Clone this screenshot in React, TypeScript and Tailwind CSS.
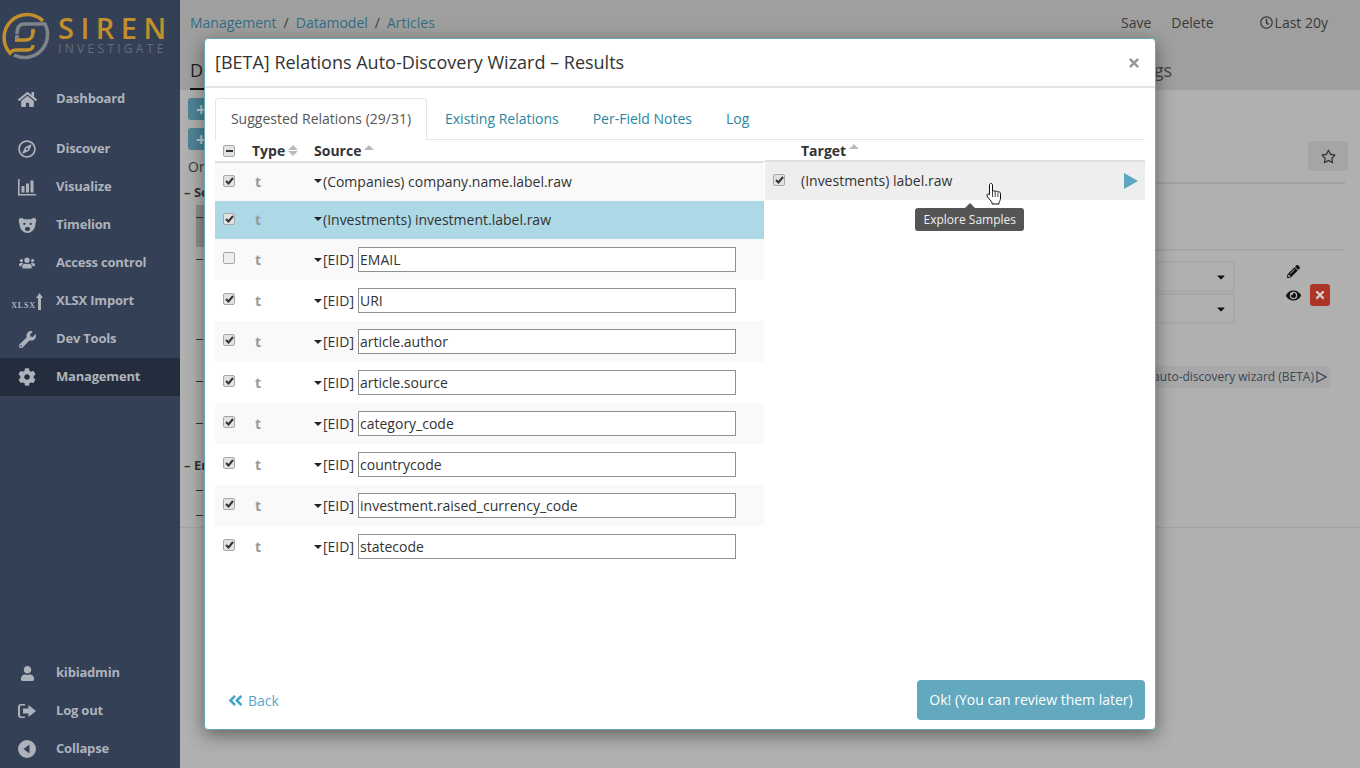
import type { ReactNode } from "react"
import {
  FaAngleDoubleLeft,
  FaCaretDown,
  FaCog,
  FaEye,
  FaHome,
  FaPencilAlt,
  FaRegClock,
  FaRegCompass,
  FaRegStar,
  FaTimes,
  FaUser,
  FaUsers,
  FaWrench,
} from "react-icons/fa"

const font = { fontFamily: '"Open Sans", sans-serif' }

function BarsIcon() {
  return (
    <svg width="18" height="18" viewBox="0 0 18 18" fill="currentColor">
      <path d="M0 1h1.600v15H18v1.600H0z" />
      <rect x="3.500" y="8" width="3" height="6.500" />
      <rect x="8" y="5.500" width="3" height="9" />
      <rect x="12.500" y="2.500" width="3" height="12" />
    </svg>
  )
}

function BearIcon() {
  return (
    <svg width="19" height="17" viewBox="0 0 18 16" fill="currentColor">
      <path d="M1 1.500C3 .5 4.500 1 5.500 2h7c1-1 2.500-1.500 4.500-.5.500 2 .3 3.500-.5 4.500.3 4-2.500 9-7.500 9s-7.800-5-7.500-9C.7 5 .5 3.500 1 1.500z" />
      <circle cx="6" cy="6.500" r="1.100" fill="#344056" />
      <circle cx="12" cy="6.500" r="1.100" fill="#344056" />
      <path d="M6.500 10.500c1-1.500 4-1.500 5 0 0 2-1.200 2.800-2.500 2.800s-2.500-.8-2.500-2.800z" fill="#344056" />
    </svg>
  )
}

function LogoutIcon() {
  return (
    <svg width="18" height="16" viewBox="0 0 18 16" fill="currentColor">
      <path d="M3 1h4v1.500H3.200c-.7 0-1.200.5-1.200 1.200v8.600c0 .7.500 1.200 1.200 1.200H7V15H3c-1.700 0-3-1.300-3-3V4c0-1.700 1.300-3 3-3z" />
      <path d="M10.500 2 18 8l-7.500 6v-3.500H5v-5h5.500z" />
    </svg>
  )
}

function CollapseIcon() {
  return (
    <svg width="18" height="18" viewBox="0 0 18 18" fill="currentColor">
      <path fillRule="evenodd" d="M9 0a9 9 0 1 1 0 18A9 9 0 0 1 9 0zm2.500 4.500L5.500 9l6 4.500z" />
    </svg>
  )
}

function XlsxIcon() {
  return (
    <span className="flex items-end">
      <span className="text-[8px] leading-none font-bold tracking-[0.8px]" style={{ fontFamily: '"Liberation Serif", serif' }}>
        XLSX
      </span>
      <svg width="7" height="17" viewBox="0 0 7 17" fill="currentColor">
        <path d="M3.500 0 7 5H5v12H2V5H0z" />
      </svg>
    </span>
  )
}

function Logo() {
  return (
    <div className="flex h-[80px] items-start pl-[1px] pt-[11px]">
      <svg width="51" height="50" viewBox="0 0 51 50" fill="none" strokeWidth="3.500">
        <path d="M42 10A23 23 0 0 0 9 42Q11 39 15 39H27C31 39 32 36 32 34" stroke="#c28f2c" />
        <path d="M14 29H25C29 29 32 26 32 21" stroke="#c28f2c" />
        <circle cx="32" cy="20" r="2.200" fill="#c28f2c" />
        <path d="M13 44A23 23 0 0 0 44 13H23C18 13 16 17 16 23" stroke="#80848a" />
        <circle cx="16" cy="26" r="2.200" fill="#80848a" />
      </svg>
      <div className="ml-[6px] mt-[2px] flex flex-col">
        <span className="text-[29px] font-semibold leading-[29px] tracking-[6.500px] text-[#c28f2c]">SIREN</span>
        <span className="mt-[1px] text-[12px] leading-[12px] tracking-[3.300px] text-[#646c7c]">INVESTIGATE</span>
      </div>
    </div>
  )
}

function NavItem({ icon, label, active }: { icon: ReactNode; label: string; active?: boolean }) {
  return (
    <div className={`flex h-[38px] items-center text-[#aeb3bb] ${active ? "bg-[#232d3d]" : ""}`}>
      <span className="flex w-[56px] justify-center pr-[2px]">{icon}</span>
      <span className="text-[13px] font-bold tracking-[-0.2px]">{label}</span>
    </div>
  )
}

function Sidebar() {
  return (
    <aside className="flex h-full w-[180px] shrink-0 flex-col justify-between bg-[#344056]">
      <div>
        <Logo />
        <NavItem icon={<FaHome size={19} />} label="Dashboard" />
        <div className="h-[12px]" />
        <NavItem icon={<FaRegCompass size={18} />} label="Discover" />
        <NavItem icon={<BarsIcon />} label="Visualize" />
        <NavItem icon={<BearIcon />} label="Timelion" />
        <NavItem icon={<FaUsers size={16} />} label="Access control" />
        <NavItem icon={<XlsxIcon />} label="XLSX Import" />
        <NavItem icon={<FaWrench size={17} />} label="Dev Tools" />
        <NavItem icon={<FaCog size={18} />} label="Management" active />
      </div>
      <div>
        <NavItem icon={<FaUser size={15} />} label="kibiadmin" />
        <NavItem icon={<LogoutIcon />} label="Log out" />
        <NavItem icon={<CollapseIcon />} label="Collapse" />
      </div>
    </aside>
  )
}

function Dash({ className }: { className: string }) {
  return <div className={`ml-[8px] h-px w-[7px] bg-[#333] ${className}`} />
}

function Background() {
  return (
    <main className="flex h-full min-w-0 flex-1 flex-col bg-[#b0b0b0]">
      <div className="h-[90px] bg-[#9f9f9f] px-[10px]">
        <div className="flex h-[45px] items-center text-[14px] text-[#3a3a3a]">
          <span className="text-[#326d82]">Management</span>
          <span className="mx-[7px]">/</span>
          <span className="text-[#326d82]">Datamodel</span>
          <span className="mx-[7px]">/</span>
          <span className="text-[#326d82]">Articles</span>
          <span className="ml-auto">Save</span>
          <span className="ml-[20px]">Delete</span>
          <span className="ml-[46px] mr-[22px] flex items-center gap-[2px]">
            <FaRegClock size={13} /> Last 20y
          </span>
        </div>
        <div className="flex h-[45px] justify-between text-[18px] text-[#222]">
          <span className="h-[45px] w-[15px] border-b-2 border-[#111] pt-[13px] leading-[24px]">D</span>
          <span className="mr-[178px] pt-[13px] leading-[24px] text-[#444]">Settings</span>
        </div>
      </div>

      <div className="flex h-[438px] justify-between border-b border-[#a2a2a2] text-[#333]">
        <div className="w-[300px] pl-[8px] pt-[8px] text-[14px]">
          <div className="h-[22px] w-[40px] rounded-[3px] bg-[#4f8496] pl-[8px] text-[18px] font-bold leading-[22px] text-[#c2ccd0]">+</div>
          <div className="mt-[8px] h-[22px] w-[40px] rounded-[3px] bg-[#4f8496] pl-[8px] text-[18px] font-bold leading-[22px] text-[#c2ccd0]">+</div>
          <div className="mt-[6px] leading-[22px] text-[#3a3a3a]">Order</div>
          <div className="ml-[-4px] mt-[6px] text-[13px] font-bold leading-[16px]">– Search</div>
          <div className="ml-[8px] mt-[5px] h-[42px] w-[40px] bg-[#8f8f8f] pt-[12px]">
            <div className="h-px w-[7px] bg-[#333]" />
          </div>
          <Dash className="mt-[12px]" />
          <Dash className="mt-[79px]" />
          <Dash className="mt-[41px]" />
          <Dash className="mt-[41px]" />
          <div className="ml-[-4px] mt-[33px] text-[13px] font-bold leading-[16px]">– Entity</div>
          <Dash className="mt-[17px]" />
          <Dash className="mt-[24px]" />
        </div>
        <div className="flex w-[500px] flex-col items-end pr-[12px] pt-[51px]">
          <div className="flex h-[30px] w-[40px] items-center justify-center rounded-[3px] bg-[#a5a5a5] text-[#333]">
            <FaRegStar size={15} />
          </div>
          <div className="mr-[3px] mt-[11px] h-[2px] w-[300px] bg-[#a0a0a0]" />
          <div className="mr-[3px] mt-[65px] h-[2px] w-[300px] bg-[#a5a5a5]" />
          <div className="mr-[3px] mt-[10px] flex w-[300px] justify-between">
            <div className="flex w-[190px] flex-col gap-[1px]">
              <div className="flex h-[31px] items-center justify-end rounded-[3px] border-2 border-[#a5a9a9] pr-[6px] text-[#111]">
                <FaCaretDown size={12} />
              </div>
              <div className="flex h-[31px] items-center justify-end rounded-[3px] border-2 border-[#a5a9a9] pr-[6px] text-[#111]">
                <FaCaretDown size={12} />
              </div>
            </div>
            <div className="mr-[15px] flex items-start gap-[9px] pt-[3px] text-[#111]">
              <div className="flex flex-col items-center gap-[10px] pt-[1px]">
                <FaPencilAlt size={13} />
                <FaEye size={15} />
              </div>
              <div className="mt-[20px] flex h-[22px] w-[20px] items-center justify-center rounded-[3px] bg-[#ac3528] text-[#d8cfcd]">
                <FaTimes size={12} />
              </div>
            </div>
          </div>
          <div className="mr-[18px] mt-[42px] flex h-[22px] items-center gap-[2px] rounded-[3px] bg-[#a8a8a8] px-[3px] text-[12px] text-[#3c4650]">
            <span>Relations auto-discovery wizard (BETA)</span>
            <svg width="11" height="12" viewBox="0 0 11 12" fill="none" stroke="currentColor" strokeWidth="1.200">
              <path d="M1 1l9 5-9 5z" />
            </svg>
          </div>
        </div>
      </div>
    </main>
  )
}

function Check({ checked = true, minus = false, className = "" }: { checked?: boolean; minus?: boolean; className?: string }) {
  return (
    <span
      className={`flex h-[12px] w-[12px] items-center justify-center rounded-[2px] border border-[#a8a8a8] ${
        checked ? "bg-[#e2e2e2]" : "bg-[#eeeeee]"
      } ${className}`}
    >
      {minus ? (
        <span className="h-[2px] w-[7px] bg-[#333]" />
      ) : checked ? (
        <svg width="9" height="8" viewBox="0 0 9 8" fill="none" stroke="#333" strokeWidth="2">
          <path d="M1 4l2.500 2.500L8 1" />
        </svg>
      ) : null}
    </span>
  )
}

function TypeCell() {
  return <span className="w-[79px] pl-[20px] font-bold text-[#999]">t</span>
}

function Caret() {
  return <span className="h-0 w-0 border-x-[4.500px] border-t-[4.500px] border-x-transparent border-t-[#222]" />
}

function SortIcon({ both }: { both?: boolean }) {
  return (
    <span className="ml-[3px] flex flex-col gap-[1px]">
      <span className="h-0 w-0 border-x-[5px] border-b-[5px] border-x-transparent border-b-[#bbb]" />
      {both && <span className="h-0 w-0 border-x-[5px] border-t-[5px] border-x-transparent border-t-[#bbb]" />}
      {!both && <span className="h-[6px]" />}
    </span>
  )
}

function LabelRow({ label, className }: { label: string; className: string }) {
  return (
    <div className={`flex h-[38px] items-center pb-[2px] ${className}`}>
      <span className="pl-[8px]">
        <Check />
      </span>
      <TypeCell />
      <Caret />
      <span className="ml-[1px]">{label}</span>
    </div>
  )
}

const eidRows = [
  { value: "EMAIL", checked: false },
  { value: "URI", checked: true },
  { value: "article.author", checked: true },
  { value: "article.source", checked: true },
  { value: "category_code", checked: true },
  { value: "countrycode", checked: true },
  { value: "investment.raised_currency_code", checked: true },
  { value: "statecode", checked: true },
]

function WizardModal() {
  return (
    <div className="absolute left-[204px] top-[38px] flex h-[692px] w-[952px] flex-col rounded-[4px] border border-[#62a8c0] bg-white text-[14px] text-[#333] shadow-[0_5px_18px_rgba(0,0,0,0.45)]">
      <div className="flex h-[49px] shrink-0 items-center justify-between border-b-2 border-[#e5e5e5] pl-[10px] pr-[14px]">
        <h2 className="text-[18px] font-normal text-[#333]">[BETA] Relations Auto-Discovery Wizard – Results</h2>
        <FaTimes size={14} className="text-[#999]" />
      </div>

      <div className="flex min-h-0 flex-1 flex-col px-[10px] pt-[10px]">
        <div className="flex h-[42px] shrink-0 border-b border-[#e5e5e5]">
          <div className="mb-[-1px] flex h-[42px] w-[212px] items-center justify-center rounded-t-[4px] border border-b-0 border-[#e5e5e5] bg-white pb-[2px] text-[#555]">
            Suggested Relations (29/31)
          </div>
          <span className="ml-[18px] flex items-center text-[#2b86a3]">Existing Relations</span>
          <span className="ml-[34px] flex items-center text-[#2b86a3]">Per-Field Notes</span>
          <span className="ml-[34px] flex items-center text-[#2b86a3]">Log</span>
        </div>

        <div className="flex flex-1">
          <div className="w-[549px]">
            <div className="flex h-[23px] items-center border-b-2 border-[#dedede] font-bold">
              <span className="pl-[8px]">
                <Check minus />
              </span>
              <span className="ml-[17px] flex w-[62px] items-center">
                Type
                <SortIcon both />
              </span>
              <span className="flex items-center">
                Source
                <SortIcon />
              </span>
            </div>
            <LabelRow label="(Companies) company.name.label.raw" className="bg-[#f9f9f9]" />
            <LabelRow label="(Investments) investment.label.raw" className="bg-[#add8e6]" />
            {eidRows.map((row, i) => (
              <div key={row.value} className={`flex h-[41px] items-center ${i % 2 === 0 ? "bg-[#f9f9f9]" : "bg-white"}`}>
                <span className="pl-[8px]">
                  <Check checked={row.checked} className="mb-[4px]" />
                </span>
                <TypeCell />
                <Caret />
                <span className="ml-[1px]">[EID]</span>
                <input
                  readOnly
                  value={row.value}
                  className="ml-[4px] h-[25px] w-[378px] border border-[#8f8f8f] bg-white px-[1px] text-[14px] text-[#333]"
                  style={font}
                />
              </div>
            ))}
          </div>

          <div className="relative ml-[1px] w-[380px]">
            <div className="flex h-[22px] items-center border-b-2 border-[#dedede] pl-[36px] font-bold">
              Target
              <SortIcon />
            </div>
            <div className="flex h-[38px] items-center bg-[#eeeeee] pl-[8px] pr-[7px]">
              <Check className="mb-[2px]" />
              <span className="mb-[2px] ml-[16px]">(Investments) label.raw</span>
              <svg width="14" height="16" viewBox="0 0 14 16" fill="#5ba8c0" className="ml-auto">
                <path d="M0 0l14 8-14 8z" />
              </svg>
            </div>
            <div className="absolute left-[150px] top-[68px] rounded-[3px] bg-[#555] px-[8.500px] py-[3px] text-[12px] leading-[17px] text-[#f0f0f0]">
              Explore Samples
              <span className="absolute left-1/2 top-[-5px] ml-[-5px] h-0 w-0 border-x-[5px] border-b-[5px] border-x-transparent border-b-[#555]" />
            </div>
            <svg width="17" height="23" viewBox="0 0 17 23" className="absolute left-[221px] top-[42px]">
              <path
                d="M5 1.500c.9 0 1.500.6 1.500 1.500v6.500c.2-1 2.500-1 2.700.3.3-1 2.500-.9 2.700.5.400-.8 2.600-.6 2.600 1.200v4.500c0 2-.8 3-1.500 4.500v1.500H6v-1.500c-1-1.500-4.500-5.500-5-6.500-.6-1.500 1-2.600 2.200-1.500l.3.3V3c0-.9.600-1.500 1.500-1.500z"
                fill="#fff"
                stroke="#111"
                strokeWidth="1"
              />
              <path d="M6.500 10v5M9.200 10v5M11.900 11v4" stroke="#111" strokeWidth=".8" />
            </svg>
          </div>
        </div>

        <div className="flex h-[49px] shrink-0 items-start justify-between pb-[9px]">
          <span className="mt-[10px] flex items-center gap-[4px] pl-[12px] text-[#5ba8c8]">
            <FaAngleDoubleLeft size={17} className="text-[#45a5c9]" /> Back
          </span>
          <button className="h-[40px] w-[228px] rounded-[4px] bg-[#62a8bf] pb-[2px] text-[14px] text-white" style={font}>
            Ok! (You can review them later)
          </button>
        </div>
      </div>
    </div>
  )
}

export default function App() {
  return (
    <div className="relative flex h-screen w-full overflow-hidden" style={font}>
      <Sidebar />
      <Background />
      <WizardModal />
    </div>
  )
}
